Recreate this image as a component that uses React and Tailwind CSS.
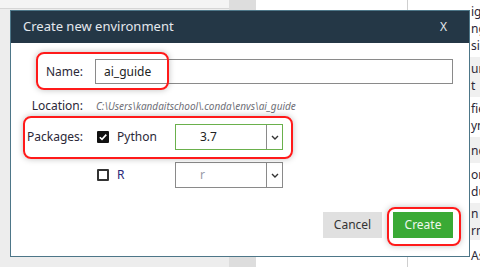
import React from 'react';

// only the last few pixels of this column show beside the dialog
const rows = [
  { bg: 'bg-white', h: 'h-[57px]', lines: ['ig', 'ng', 'sic'] },
  { bg: 'bg-[#f0f0f0]', h: 'h-[40px]', lines: ['ur', 't'] },
  { bg: 'bg-white', h: 'h-[40px]', lines: ['fie', 'yn'] },
  { bg: 'bg-[#f0f0f0]', h: 'h-[26px]', lines: ['nc'] },
  { bg: 'bg-white', h: 'h-[40px]', lines: ['or', 'du'] },
  { bg: 'bg-[#f0f0f0]', h: 'h-[37px]', lines: ['n a', 'rm'] },
  { bg: 'bg-white', h: 'h-[30px]', lines: ['Ask'] },
];

function Chevron() {
  return (
    <svg width="8" height="5" viewBox="0 0 8 5" className="text-[#333]">
      <polyline points="1,1 4,4 7,1" fill="none" stroke="currentColor" strokeWidth="1.4" />
    </svg>
  );
}

function Select({ value, active, muted }) {
  return (
    <div className={`flex h-[26px] w-[108px] border bg-white ${active ? 'border-[#6ab04c]' : 'border-[#8a8a8a]'}`}>
      <div className={`flex flex-1 items-center pl-[24px] text-[12px] ${muted ? 'text-[#9a9aa8]' : 'text-[#222]'}`}>{value}</div>
      <div className="flex w-[16px] items-center justify-center border-l border-[#8a8a8a]">
        <Chevron />
      </div>
    </div>
  );
}

export default function App() {
  return (
    <div className="relative h-[267px] w-[480px] overflow-hidden font-['Noto_Sans','Open_Sans',sans-serif] text-[#2b2838]">
      {/* page under the dialog */}
      <div className="flex h-full">
        <div className="flex w-[229px] shrink-0 flex-col bg-[#ededed]">
          <div className="h-[9px] border-b border-[#d6d6d6] bg-[#f4f4f4]" />
        </div>
        <div className="w-[27px] shrink-0 bg-[#dddddd]" />
        <div className="w-[151px] shrink-0 bg-white" />
        <div className="min-w-0 flex-1 overflow-hidden border-l border-[#cfcfcf] bg-white text-[12px] leading-[17px]">
          {rows.map((r, i) => (
            <div key={i} className={`${r.bg} ${r.h} flex flex-col justify-center pl-[63px]`}>
              {r.lines.map((l) => (
                <div key={l} className="whitespace-nowrap">{l}</div>
              ))}
            </div>
          ))}
        </div>
      </div>

      {/* dialog */}
      <div className="absolute left-[10px] top-[10px] flex h-[247px] w-[460px] flex-col border border-[#4d7688] bg-white">
        <div className="flex h-[32px] items-center justify-between bg-[#243746] pl-[12px] pr-[22px] text-[13px] text-[#e4e9ee]">
          <span>Create new environment</span>
          <span className="text-[12px]">X</span>
        </div>

        <div className="relative flex flex-1 flex-col pl-[12px] pr-[16px] pt-[16px] text-[12px]">
          <div className="flex h-[25px] items-center">
            <div className="w-[60px] text-right">Name:</div>
            <div className="ml-[12px] flex h-full flex-1 items-center border border-[#8a8a8a] pl-[8px] text-[#222]">ai_guide</div>
          </div>

          <div className="mt-[12px] flex h-[20px] items-center">
            <div className="w-[60px] text-right">Location:</div>
            <div className="ml-[13px] text-[10px] italic text-[#6f6f78]">C:\Users\kandaitschool\.conda\envs\ai_guide</div>
          </div>

          <div className="mt-[8px] flex items-center">
            <div className="w-[60px] text-right">Packages:</div>
            <div className="ml-[14px] flex h-[12px] w-[12px] items-center justify-center rounded-[1px] bg-[#111]">
              <svg width="10" height="10" viewBox="0 0 10 10">
                <polyline points="1.8,5.2 4,7.4 8.3,2.6" fill="none" stroke="white" strokeWidth="1.6" />
              </svg>
            </div>
            <div className="ml-[8px] w-[58px]">Python</div>
            <Select value="3.7" active />
          </div>

          <div className="mt-[12px] flex items-center">
            <div className="w-[60px]" />
            <div className="ml-[14px] h-[12px] w-[12px] rounded-[1px] border-2 border-[#333]" />
            <div className="ml-[8px] w-[58px] text-[#2b2878]">R</div>
            <Select value="r" muted />
          </div>

          <div className="mt-[24px] flex justify-end gap-[11px]">
            <button className="h-[26px] w-[59px] bg-[#e0e0e0] text-[12px] text-[#333]">Cancel</button>
            <button className="h-[26px] w-[60px] bg-[#3aaa35] text-[12px] text-[#eef7ee]">Create</button>
          </div>

          {/* red annotation boxes */}
          <div className="pointer-events-none absolute left-[25px] top-[9px] h-[38px] w-[133px] rounded-[8px] border-2 border-[#ff1a1a] shadow-[0_0_6px_rgba(0,0,0,0.25)]" />
          <div className="pointer-events-none absolute left-[12px] top-[73px] h-[43px] w-[270px] rounded-[8px] border-2 border-[#ff1a1a] shadow-[0_0_6px_rgba(0,0,0,0.25)]" />
          <div className="pointer-events-none absolute left-[376px] top-[164px] h-[39px] w-[74px] rounded-[8px] border-2 border-[#ff1a1a] shadow-[0_0_6px_rgba(0,0,0,0.25)]" />
        </div>
      </div>
    </div>
  );
}
